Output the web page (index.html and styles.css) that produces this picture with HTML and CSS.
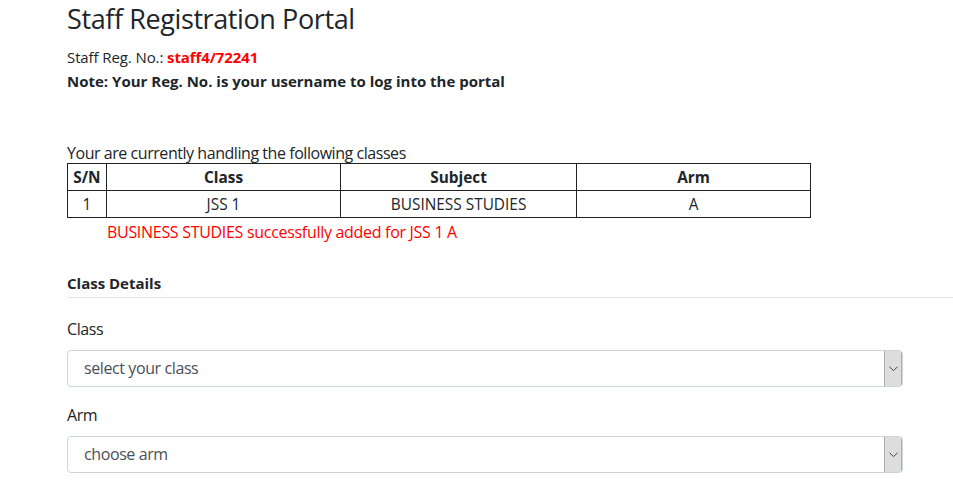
FILE: index.html
```html
<!DOCTYPE html>
<html lang="en">
<head>
<meta charset="utf-8">
<title>Staff Registration Portal</title>
<link rel="stylesheet" href="styles.css">
</head>
<body>
<div class="page">
  <h1 class="title">Staff Registration Portal</h1>
  <p class="reg">Staff Reg. No.: <strong class="regno">staff4/72241</strong></p>
  <p class="note">Note: Your Reg. No. is your username to log into the portal</p>

  <p class="handling">Your are currently handling the following classes</p>
  <table class="classes">
    <thead>
      <tr><th class="sn">S/N</th><th class="col">Class</th><th class="col">Subject</th><th class="col">Arm</th></tr>
    </thead>
    <tbody>
      <tr><td>1</td><td>JSS 1</td><td>BUSINESS STUDIES</td><td>A</td></tr>
    </tbody>
  </table>
  <p class="success">BUSINESS STUDIES successfully added for JSS 1 A</p>

  <h2 class="section">Class Details</h2>

  <div class="field">
    <label class="label">Class</label>
    <div class="select">
      <span class="select-text">select your class</span>
      <span class="select-btn"><svg width="9" height="6" viewBox="0 0 9 6"><path d="M0.5 0.8 L4.5 4.6 L8.5 0.8" fill="none" stroke="#444" stroke-width="1"/></svg></span>
    </div>
  </div>
  <div class="field">
    <label class="label">Arm</label>
    <div class="select">
      <span class="select-text">choose arm</span>
      <span class="select-btn"><svg width="9" height="6" viewBox="0 0 9 6"><path d="M0.5 0.8 L4.5 4.6 L8.5 0.8" fill="none" stroke="#444" stroke-width="1"/></svg></span>
    </div>
  </div>
</div>
</body>
</html>
```

FILE: styles.css
```css
html, body {
  margin: 0;
  padding: 0;
  background: #fff;
}
body {
  font-family: "Open Sans", "Noto Sans", sans-serif;
  color: #212529;
  font-size: 16px;
}
.page {
  padding-left: 67px;
}
.title {
  font-size: 27px;
  font-weight: 400;
  line-height: 38px;
  margin: 0;
  letter-spacing: -0.4px;
}
.reg {
  margin: 8px 0 0;
  font-size: 15px;
  line-height: 22px;
  letter-spacing: -0.1px;
}
.regno {
  color: #ff0000;
  font-weight: 700;
}
.note {
  margin: 2px 0 0;
  font-size: 15px;
  line-height: 22px;
  font-weight: 700;
  letter-spacing: 0;
}
.handling {
  margin: 51px 0 0;
  font-size: 16px;
  line-height: 20px;
  letter-spacing: -0.45px;
}
.classes {
  border-collapse: collapse;
  width: 744px;
  font-size: 15.4px;
}
.classes th, .classes td {
  border: 1.5px solid #222;
  text-align: center;
  padding: 0 4px;
  height: 26px;
}
.classes th {
  font-weight: 700;
}
.classes th.sn {
  width: 30px;
}
.classes th.col {
  width: 235px;
}
.success {
  margin: 2px 0 0 40px;
  color: #ff0000;
  font-size: 16px;
  line-height: 24px;
  letter-spacing: -0.3px;
}
.section {
  margin: 28px 0 0;
  font-size: 15px;
  line-height: 22px;
  font-weight: 700;
  padding-bottom: 3px;
  border-bottom: 1px solid #e2e4e6;
  letter-spacing: 0;
}
.field {
  margin-top: 19px;
}
.field + .field {
  margin-top: 16px;
}
.label {
  display: block;
  font-size: 16px;
  line-height: 24px;
  margin-bottom: 9px;
  letter-spacing: -0.4px;
}
.select {
  display: flex;
  width: 836px;
  height: 37px;
  box-sizing: border-box;
  border: 1px solid #ced4da;
  border-radius: 4px;
  background: #fff;
  overflow: hidden;
}
.select-text {
  flex: 1;
  padding-left: 16px;
  line-height: 35px;
  color: #495057;
  font-size: 16px;
  letter-spacing: -0.4px;
}
.select-btn {
  width: 16px;
  display: flex;
  align-items: center;
  justify-content: center;
  background: #dddddd;
  border-left: 1px solid #a9a9a9;
  border-right: 1px solid #b0b0b0;
}
```
